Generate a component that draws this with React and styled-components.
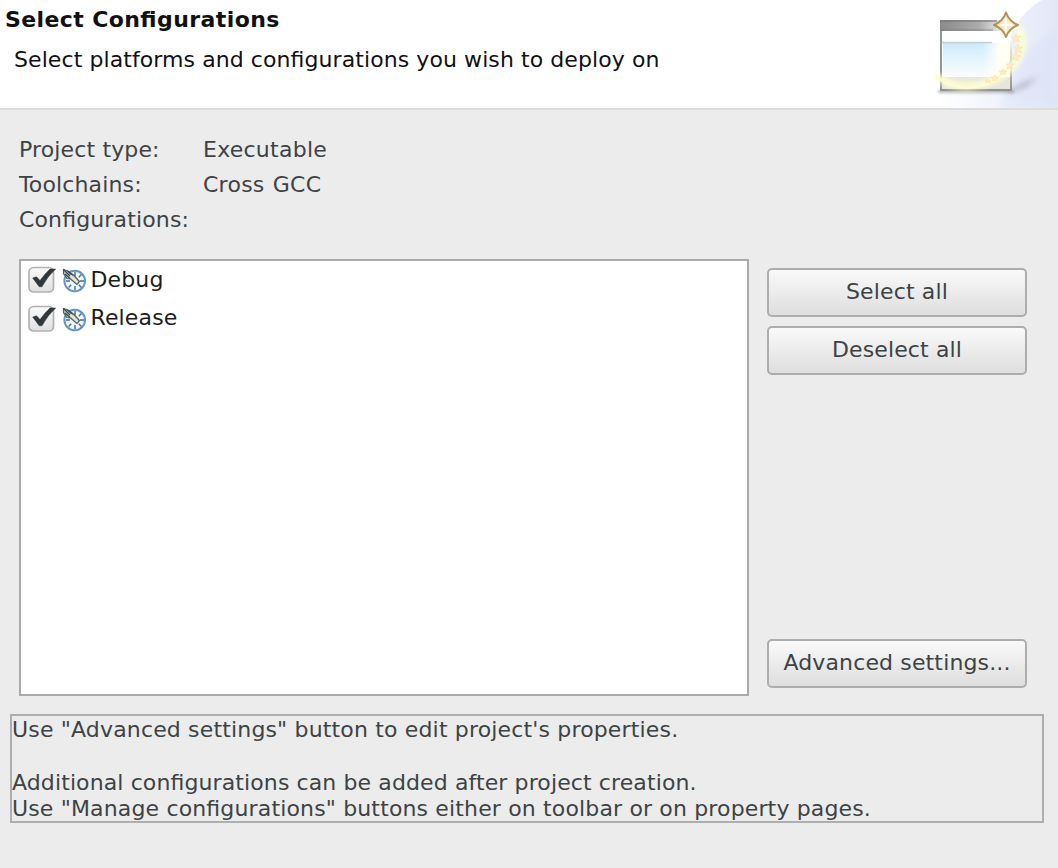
import React from 'react';
import styled, { createGlobalStyle } from 'styled-components';

const GlobalStyle = createGlobalStyle`
  * { box-sizing: border-box; }
  body {
    margin: 0;
    background: #ececec;
    color: #3d4345;
    font-family: "DejaVu Sans", sans-serif;
    font-size: 22px;
    line-height: 26px;
    font-feature-settings: "liga" 1;
    letter-spacing: 0.14px;
    overflow: hidden;
  }
`;

const Dialog = styled.main`
  width: 1058px;
  height: 868px;
  display: flex;
  flex-direction: column;
`;

const Header = styled.header`
  height: 110px;
  flex: none;
  display: flex;
  justify-content: space-between;
  background: #fff;
  border-bottom: 2px solid #dcdcdc;
  color: #111;
`;

const Heading = styled.div`
  padding: 7px 0 0 5px;
  white-space: nowrap;
`;

const Title = styled.h1`
  margin: 0;
  font-size: 22px;
  line-height: 26px;
  font-weight: bold;
  letter-spacing: 0.4px;
`;

const Subtitle = styled.p`
  margin: 14px 0 0 9px;
  letter-spacing: 0.08px;
`;

const Banner = styled.svg`
  display: block;
  width: 140px;
  height: 108px;
`;

const Facts = styled.dl`
  margin: 0;
  padding: 22px 0 0 19px;
  height: 125px;
  flex: none;
  display: grid;
  grid-template-columns: 184px 1fr;
  grid-auto-rows: 35px;
  line-height: 35px;
`;

const Fact = styled.div`
  display: contents;
`;

const Term = styled.dt``;

const Value = styled.dd`
  margin: 0;
  letter-spacing: 0.25px;
  word-spacing: 1px;
`;

const Body = styled.section`
  display: flex;
  gap: 18px;
  margin: 24px 31px 0 19px;
  height: 437px;
  flex: none;
`;

const List = styled.ul`
  margin: 0;
  padding: 0 0 0 7px;
  list-style: none;
  width: 730px;
  background: #fff;
  border: 2px solid #a9abaa;
  color: #1c1c1c;
`;

const Item = styled.li`
  height: 38.5px;
  display: flex;
  align-items: center;
`;

const CheckIcon = styled.svg`
  width: 28px;
  height: 28px;
  margin-right: 6px;
  flex: none;
`;

const ConfigIcon = styled.svg`
  width: 25px;
  height: 26px;
  margin-right: 3.5px;
  flex: none;
`;

const Label = styled.span`
  padding-bottom: 1px;
`;

const Actions = styled.div`
  display: flex;
  flex-direction: column;
  gap: 9px;
  padding: 9px 0 8px;
  width: 260px;
`;

const Button = styled.button`
  height: 49px;
  width: 100%;
  padding: 0 0 2px;
  margin-top: ${(p) => (p.$last ? 'auto' : 0)};
  border: 2px solid #adadad;
  border-radius: 5px;
  background: linear-gradient(#fafafa, #ededed 45%, #dedede);
  font: inherit;
  letter-spacing: inherit;
  color: #3d4345;
  white-space: nowrap;
`;

const Note = styled.div`
  margin: 18px 14px 0 10px;
  padding-top: 1px;
  height: 109px;
  border: 2px solid #adafae;
  line-height: 26.3px;
`;

const NoteLine = styled.p`
  margin: 0;
  height: 26.3px;
  white-space: nowrap;
  letter-spacing: ${(p) => p.$spacing}px;
`;

function WizardBanner() {
  return (
    <Banner viewBox="0 0 140 108">
      <defs>
        <linearGradient id="sky" x1="0" x2="1">
          <stop offset="0" stopColor="#fff" />
          <stop offset=".55" stopColor="#f0f3fc" />
          <stop offset="1" stopColor="#e2e7f7" />
        </linearGradient>
        <linearGradient id="bar" x1="0" x2="1">
          <stop offset="0" stopColor="#8b8b8b" />
          <stop offset=".65" stopColor="#acacac" />
          <stop offset="1" stopColor="#e8e8e8" />
        </linearGradient>
        <linearGradient id="pane" x1="0" x2="0" y1="0" y2="1">
          <stop offset="0" stopColor="#cdeafb" />
          <stop offset="1" stopColor="#fafdff" />
        </linearGradient>
        <linearGradient id="paneFade" x1="0" x2="1">
          <stop offset=".6" stopColor="#fff" stopOpacity="0" />
          <stop offset=".85" stopColor="#fffff4" />
        </linearGradient>
        <linearGradient id="edge" x1="0" x2="0" y1="0" y2="1">
          <stop offset="0" stopColor="#f4f4ea" />
          <stop offset="1" stopColor="#8f8f8b" />
        </linearGradient>
        <filter id="soft" x="-30%" y="-30%" width="160%" height="160%"><feGaussianBlur stdDeviation="2.2" /></filter>
        <filter id="shade" filterUnits="userSpaceOnUse" x="0" y="80" width="140" height="28"><feGaussianBlur stdDeviation="1.5" /></filter>
        <filter id="softer" x="-30%" y="-80%" width="160%" height="260%"><feGaussianBlur stdDeviation="3" /></filter>
      </defs>
      <path d="M20 108V90L88 50Q98 14 124 0h16v108z" fill="url(#sky)" />
      <path d="M82 108Q100 44 140 30v78z" fill="#d7dff5" opacity=".4" filter="url(#softer)" />
      <path d="M88 91L121 76L108 87L93 92z" fill="#8b8499" opacity=".6" filter="url(#softer)" />
      <path d="M20 91.500h76" stroke="#777" strokeWidth="3" opacity=".5" filter="url(#shade)" />
      <path d="M22 21h71v69H22z" fill="#fff" />
      <path d="M22 20h60v11H22z" fill="url(#bar)" />
      <path d="M22 21h57" stroke="#777" strokeWidth="2" opacity=".6" />
      <path d="M22 30h53" stroke="#777" opacity=".7" />
      <path d="M25 43h56v33H25z" fill="url(#pane)" />
      <path d="M25 42h66v35H25z" fill="url(#paneFade)" />
      <path d="M24 42.500h50" stroke="#9bb2bd" strokeWidth="1.500" opacity=".6" />
      <path d="M24 77h68v11H24z" fill="#e8e6da" />
      <path d="M92 42h2v48h-2z" fill="url(#edge)" />
      <path d="M23 31v59" stroke="#929898" strokeWidth="2" />
      <path d="M22 90h72" stroke="#92928c" strokeWidth="2.500" />
      <path d="M101 28Q108 43 99 60Q88 77 65 84Q38 91 18 76" fill="none" stroke="#ffffd2" strokeWidth="8" opacity=".85" filter="url(#soft)" />
      <path d="M17 74Q27 87 48 88Q72 87 88 72" fill="none" stroke="#fffbd8" strokeWidth="2.500" opacity=".8" />
      <g fill="#fdebc0" stroke="#f7e2ae" strokeWidth=".6">
        <path d="M98 34l1 3 4-1-3 3 2 3-4-1-3 2 1-4-3-2 4 0z" />
        <path d="M100 44l1 3 4 0-3 2 2 4-4-2-3 2 1-4-3-2 4 0z" />
        <path d="M98 52l1 3 4 1-3 2 0 3-3-2-3 1 1-3-2-2 4 0z" />
        <path d="M92 61l1 3 3 0-2 2 1 3-3-1-3 1 1-3-2-2 3 0z" />
        <path d="M85 69l1 2 3 0-2 2 0 2-2-1-3 1 1-2-2-2 3 0z" />
        <path d="M77 75l1 2 3 0-2 2 0 2-2-1-3 1 1-2-2-2 3 0z" />
        <path d="M70 79l1 2 2 0-1 2-2-1-2 1 0-2-1-1 2 0z" />
      </g>
      <path d="M88 12.500Q91 21.500 100 25Q91 28.500 88 37Q85 28.500 76 25Q85 21.500 88 12.500z" fill="#f8ecd0" stroke="#b3924e" strokeWidth="2" strokeLinejoin="round" />
      <path d="M88 18v14M82 25h12" stroke="#fffcf2" strokeWidth="2" />
    </Banner>
  );
}

function Check() {
  return (
    <CheckIcon viewBox="0 0 28 28">
      <defs>
        <linearGradient id="box" x1="0" x2="0" y1="0" y2="1">
          <stop offset="0" stopColor="#fafafa" />
          <stop offset="1" stopColor="#e0e0e0" />
        </linearGradient>
      </defs>
      <rect x="1" y="1.500" width="24.500" height="24.500" rx="4.500" fill="url(#box)" stroke="#b2b2b2" strokeWidth="1.700" />
      <path d="M4.700 12L8.500 10.800L12 14.500Q17 7.500 22 3H27.700Q19.500 10.500 14 20.800H11.200Q8 16.500 4.700 12z" fill="#30373a" stroke="#30373a" strokeWidth=".5" />
    </CheckIcon>
  );
}

function Config() {
  return (
    <ConfigIcon viewBox="0 0 25 26">
      <circle cx="12.700" cy="14" r="10.300" fill="#eef5fb" stroke="#6496c4" strokeWidth="2" />
      <path d="M13 5v4M13 19v4M4 14h4M18 14h4M19.400 7.600l-2.600 2.600M6.600 20.400l2.600-2.600M19.400 20.400l-2.600-2.600" stroke="#456d92" strokeWidth="1.400" />
      <path d="M1.500 2.500L6 4L12 8.500L17.500 14.500L15 17.500L8.500 12L5 11.500L1.500 6.500z" fill="#c5ccc6" stroke="#46606f" strokeWidth="1.200" />
      <path d="M1.500 2.500l6.500 6.500M3 7l5 4.500M5.500 4l5 4.500" stroke="#35474f" strokeWidth="1.200" />
      <path d="M8.500 8.500l7 7" stroke="#f3e9b4" strokeWidth="1.800" />
    </ConfigIcon>
  );
}

const facts = [
  ['Project type:', 'Executable'],
  ['Toolchains:', 'Cross GCC'],
  ['Configurations:', ''],
];

const noteLines = [
  { text: 'Use "Advanced settings" button to edit project\'s properties.', spacing: 0.16 },
  { text: '', spacing: 0 },
  { text: 'Additional configurations can be added after project creation.', spacing: 0.11 },
  { text: 'Use "Manage configurations" buttons either on toolbar or on property pages.', spacing: 0.15 },
];

export default function App() {
  return (
    <Dialog>
      <GlobalStyle />
      <Header>
        <Heading>
          <Title>Select Configurations</Title>
          <Subtitle>Select platforms and configurations you wish to deploy on</Subtitle>
        </Heading>
        <WizardBanner />
      </Header>
      <Facts>
        {facts.map(([term, value]) => (
          <Fact key={term}>
            <Term>{term}</Term>
            <Value>{value}</Value>
          </Fact>
        ))}
      </Facts>
      <Body>
        <List>
          {['Debug', 'Release'].map((name) => (
            <Item key={name}>
              <Check />
              <Config />
              <Label>{name}</Label>
            </Item>
          ))}
        </List>
        <Actions>
          <Button>Select all</Button>
          <Button>Deselect all</Button>
          <Button $last>Advanced settings...</Button>
        </Actions>
      </Body>
      <Note>
        {noteLines.map((line, i) => (
          <NoteLine key={i} $spacing={line.spacing}>{line.text}</NoteLine>
        ))}
      </Note>
    </Dialog>
  );
}
